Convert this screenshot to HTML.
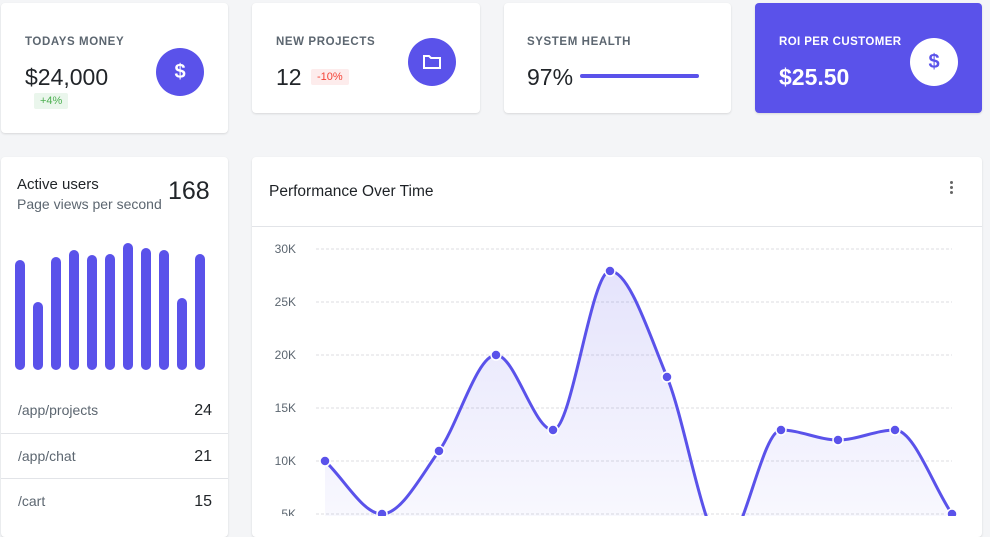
<!DOCTYPE html>
<html><head><meta charset="utf-8"><style>
*{box-sizing:border-box;margin:0;padding:0}
body{width:990px;height:516px;overflow:hidden;background:#f4f5f7;font-family:"Liberation Sans",sans-serif;position:relative;color:#212529}
.card{position:absolute;background:#fff;border-radius:4px;box-shadow:0 1px 2px rgba(0,0,0,.12)}
.lbl{position:absolute;font-size:11.5px;letter-spacing:.6px;color:#5c6670;font-weight:bold}
.val{position:absolute;font-size:23px;color:#212529}
.ic{position:absolute;width:48px;height:48px;border-radius:50%;background:#5a52ea;color:#fff;display:flex;align-items:center;justify-content:center;font-size:20px;font-weight:bold}
.badge{position:absolute;font-size:11px;padding:2px 6px;border-radius:2px}
.row{position:absolute;left:0;width:227px;height:45px;border-top:1px solid #e2e4e8;font-size:14px;color:#5c6670}
.row span{position:absolute;left:17px;top:14px}
.row b{position:absolute;right:16px;top:14px;font-weight:normal;font-size:16px;color:#212529}
</style></head><body>
<div class="card" style="left:1px;top:3px;width:227px;height:130px">
 <div class="lbl" style="left:24px;top:33px">TODAYS MONEY</div>
 <div class="val" style="left:24px;top:61px">$24,000</div>
 <div class="badge" style="left:33px;top:90px;background:#eaf6ec;color:#4caf50">+4%</div>
 <div class="ic" style="left:155px;top:45px">$</div>
</div>
<div class="card" style="left:252px;top:3px;width:228px;height:110px">
 <div class="lbl" style="left:24px;top:33px">NEW PROJECTS</div>
 <div class="val" style="left:24px;top:61px">12</div>
 <div class="badge" style="left:59px;top:66px;background:#fdecec;color:#f44336">-10%</div>
 <div class="ic" style="left:156px;top:35px"><svg width="20" height="16" viewBox="0 0 20 16"><path d="M2 2h5l2 2h9v10H2z" fill="none" stroke="#fff" stroke-width="2"/></svg></div>
</div>
<div class="card" style="left:504px;top:3px;width:227px;height:110px">
 <div class="lbl" style="left:23px;top:33px">SYSTEM HEALTH</div>
 <div class="val" style="left:23px;top:61px">97%</div>
 <div style="position:absolute;left:76px;top:71px;width:119px;height:4px;border-radius:2px;background:#5a52ea"></div>
</div>
<div class="card" style="left:755px;top:3px;width:227px;height:110px;background:#5a52ea">
 <div class="lbl" style="left:24px;top:33px;color:#fff;letter-spacing:.4px">ROI PER CUSTOMER</div>
 <div class="val" style="left:24px;top:61px;color:#fff;font-weight:bold">$25.50</div>
 <div class="ic" style="left:155px;top:35px;background:#fff;color:#5a52ea">$</div>
</div>
<div class="card" style="left:1px;top:157px;width:227px;height:380px">
 <div style="position:absolute;left:16px;top:19px;font-size:15px;color:#212529">Active users</div>
 <div style="position:absolute;left:16px;top:39px;font-size:14px;color:#5c6670">Page views per second</div>
 <div style="position:absolute;left:167px;top:20px;font-size:25px">168</div>
 <svg style="position:absolute;left:0;top:0" width="227" height="230">
  <g stroke="#5a52ea" stroke-width="10" stroke-linecap="round">
   <line x1="19" y1="108" x2="19" y2="208"/><line x1="37" y1="150" x2="37" y2="208"/><line x1="55" y1="105" x2="55" y2="208"/><line x1="73" y1="98" x2="73" y2="208"/><line x1="91" y1="103" x2="91" y2="208"/><line x1="109" y1="102" x2="109" y2="208"/><line x1="127" y1="91" x2="127" y2="208"/><line x1="145" y1="96" x2="145" y2="208"/><line x1="163" y1="98" x2="163" y2="208"/><line x1="181" y1="146" x2="181" y2="208"/><line x1="199" y1="102" x2="199" y2="208"/>
  </g></svg>
 <div class="row" style="top:231px;border-top:none"><span>/app/projects</span><b>24</b></div>
 <div class="row" style="top:276px"><span>/app/chat</span><b>21</b></div>
 <div class="row" style="top:321px"><span>/cart</span><b>15</b></div>
</div>
<div class="card" style="left:252px;top:157px;width:730px;height:380px">
 <div style="position:absolute;left:17px;top:26px;font-size:15.5px;color:#1e2226">Performance Over Time</div>
 <div style="position:absolute;left:698px;top:24px;width:4px;font-size:0">
  <div style="width:3px;height:3px;border-radius:50%;background:#666;margin-bottom:2px"></div><div style="width:3px;height:3px;border-radius:50%;background:#666;margin-bottom:2px"></div><div style="width:3px;height:3px;border-radius:50%;background:#666"></div></div>
 <div style="position:absolute;left:0;top:69px;width:730px;border-top:1px solid #e2e4e8"></div>
</div>
<svg style="position:absolute;left:0;top:0" width="990" height="516">
 <defs><linearGradient id="g" x1="0" y1="0" x2="0" y2="1"><stop offset="0" stop-color="#5a52ea" stop-opacity=".16"/><stop offset="1" stop-color="#5a52ea" stop-opacity=".02"/></linearGradient></defs>
 <g stroke="#dcdde0" stroke-dasharray="3 2"><line x1="316" y1="249" x2="952" y2="249"/><line x1="316" y1="302" x2="952" y2="302"/><line x1="316" y1="355" x2="952" y2="355"/><line x1="316" y1="408" x2="952" y2="408"/><line x1="316" y1="461" x2="952" y2="461"/><line x1="316" y1="514" x2="952" y2="514"/></g>
 <g font-size="12" fill="#5c6670" text-anchor="end"><text x="296" y="253">30K</text><text x="296" y="306">25K</text><text x="296" y="359">20K</text><text x="296" y="412">15K</text><text x="296" y="465">10K</text><text x="296" y="518">5K</text></g>
 <path d="M325,461C344,478.7 363,514 382,514C401,514 420,477.5 439,451C458,424.5 477,355 496,355C515,355 534,430 553,430C572,430 591,271 610,271C629,271 648,331 667,377C686,423 705,546 724,546C743,546 762,430 781,430C800,430 819,440 838,440C857,440 876,430 895,430C914,430 933,486 952,514L952,560L325,560Z" fill="url(#g)"/>
 <path d="M325,461C344,478.7 363,514 382,514C401,514 420,477.5 439,451C458,424.5 477,355 496,355C515,355 534,430 553,430C572,430 591,271 610,271C629,271 648,331 667,377C686,423 705,546 724,546C743,546 762,430 781,430C800,430 819,440 838,440C857,440 876,430 895,430C914,430 933,486 952,514" fill="none" stroke="#5a52ea" stroke-width="3"/>
 <g fill="#5a52ea" stroke="#fff" stroke-width="1.5"><circle cx="325" cy="461" r="5"/><circle cx="382" cy="514" r="5"/><circle cx="439" cy="451" r="5"/><circle cx="496" cy="355" r="5"/><circle cx="553" cy="430" r="5"/><circle cx="610" cy="271" r="5"/><circle cx="667" cy="377" r="5"/><circle cx="781" cy="430" r="5"/><circle cx="838" cy="440" r="5"/><circle cx="895" cy="430" r="5"/><circle cx="952" cy="514" r="5"/></g>
</svg>
</body></html>
